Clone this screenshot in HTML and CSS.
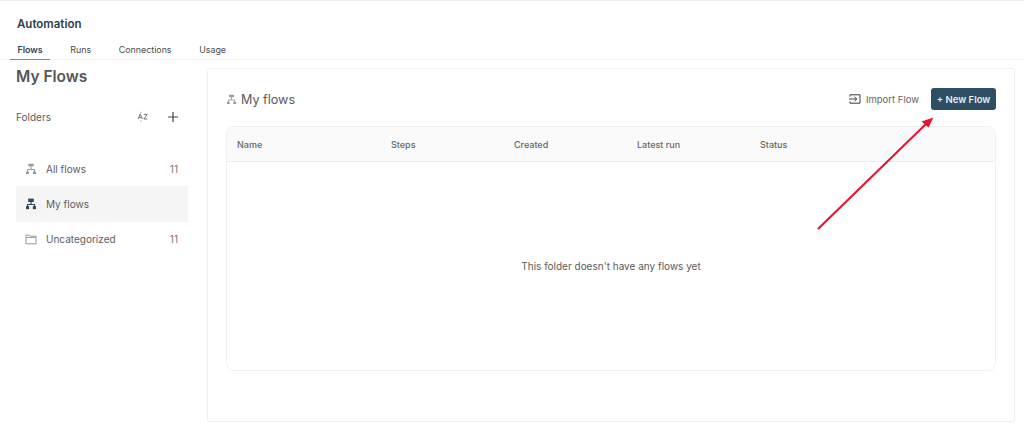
FILE: index.html
```html
<!DOCTYPE html>
<html lang="en">
<head>
<meta charset="utf-8">
<title>Automation</title>
<link rel="stylesheet" href="styles.css">
</head>
<body>
<div class="page">
  <header class="topbar">
    <h1 class="app-title">Automation</h1>
    <nav class="tabs">
      <span class="tab active">Flows</span>
      <span class="tab">Runs</span>
      <span class="tab">Connections</span>
      <span class="tab">Usage</span>
    </nav>
  </header>
  <div class="content">
    <aside class="sidebar">
      <h2 class="side-title">My Flows</h2>
      <div class="folders-head">
        <span class="folders-label">Folders</span>
        <span class="folder-actions">
          <svg class="az" width="12" height="12" viewBox="0 0 12 12" fill="none" stroke="#666" stroke-width=".9"><path d="M1.2 8 3.2 2.8 5.2 8M1.9 6.4h2.6"/><path d="M6.8 3.4h3.4L6.8 8h3.6"/><path d="M4 9.4v1.2M4 .8v1" stroke-width=".8"/></svg>
          <svg width="12" height="12" viewBox="0 0 12 12" fill="none" stroke="#444" stroke-width="1.2"><path d="M6 1v10M1 6h10"/></svg>
        </span>
      </div>
      <ul class="folder-list">
        <li class="folder">
          <svg class="fi" width="12" height="12" viewBox="0 0 12 12" fill="none" stroke="#999"><rect x="3.3" y="0.8" width="5.4" height="2.6" fill="#999" stroke="none"/><path d="M6 3.4v3M2.5 9V6.5h7V9" stroke-width="1"/><rect x="1" y="8.6" width="3" height="2.4" fill="#999" stroke="none"/><rect x="8" y="8.6" width="3" height="2.4" fill="#999" stroke="none"/></svg>
          <span class="folder-name">All flows</span><span class="count">11</span>
        </li>
        <li class="folder selected">
          <svg class="fi" width="12" height="12" viewBox="0 0 12 12" fill="none" stroke="#2d4a5e"><rect x="3.2" y="0.6" width="5.6" height="3.4" fill="#2d4a5e" stroke="none"/><path d="M6 4v2.4M2.5 9V6.5h7V9" stroke-width="1.2"/><rect x="1" y="8.2" width="3.2" height="3" fill="#2d4a5e" stroke="none"/><rect x="7.8" y="8.2" width="3.2" height="3" fill="#2d4a5e" stroke="none"/></svg>
          <span class="folder-name">My flows</span>
        </li>
        <li class="folder">
          <svg class="fi" width="12" height="12" viewBox="0 0 12 12" fill="none" stroke="#999" stroke-width="1"><path d="M1 3.6V2h3.4l1 1.2h5.6v7.6H1z"/><path d="M1 4.4h10"/></svg>
          <span class="folder-name">Uncategorized</span><span class="count">11</span>
        </li>
      </ul>
    </aside>
    <main class="panel">
      <div class="panel-head">
        <div class="panel-title">
          <svg width="11" height="11" viewBox="0 0 12 12" fill="none" stroke="#999"><rect x="3.3" y="0.8" width="5.4" height="2.6" fill="#999" stroke="none"/><path d="M6 3.4v3M2.5 9V6.5h7V9" stroke-width="1"/><rect x="1" y="8.6" width="3" height="2.4" fill="#999" stroke="none"/><rect x="8" y="8.6" width="3" height="2.4" fill="#999" stroke="none"/></svg>
          <span>My flows</span>
        </div>
        <div class="panel-actions">
          <span class="import">
            <svg width="12" height="12" viewBox="0 0 12 12" fill="none" stroke="#3c3c3c" stroke-width="1"><path d="M1 3.5V1.8h10v8.4H1V8.5"/><path d="M0 6h7.5M5.6 3.9 7.8 6 5.6 8.1"/></svg>
            Import Flow
          </span>
          <button class="new-flow" type="button">+ New Flow</button>
        </div>
      </div>
      <section class="table">
        <div class="table-head">
          <span class="col-name">Name</span>
          <span class="col">Steps</span>
          <span class="col">Created</span>
          <span class="col">Latest run</span>
          <span class="col">Status</span>
        </div>
        <div class="empty">This folder doesn't have any flows yet</div>
      </section>
    </main>
  </div>
  <svg class="arrow" width="1024" height="427" viewBox="0 0 1024 427" fill="none">
    <path d="M818.5 228.5 928 122" stroke="#e8142f" stroke-width="2.1" stroke-linecap="round"/>
    <path d="M933.5 117.5 921.5 121.5 928.5 127.5z" fill="#e8142f"/>
  </svg>
</div>
</body>
</html>
```
FILE: styles.css
```css
* { box-sizing: border-box; }
html, body { margin: 0; padding: 0; background: #fff; }
body { font-family: Inter, "Liberation Sans", sans-serif; color: #4a4a4a; overflow: hidden; }
.page { position: relative; width: 1024px; height: 427px; display: flex; flex-direction: column; border-top: 1px solid #ececec; }
.topbar { height: 59px; border-bottom: 1px solid #f0f0f0; display: flex; flex-direction: column; justify-content: flex-end; padding-left: 10px; flex: none; }
.app-title { margin: 0 0 8px 7px; font-size: 11.5px; line-height: 15px; font-weight: 600; color: #2d3f4e; }
.tabs { display: flex; gap: 12.6px; margin-bottom: -1px; }
.tab { padding: 0 7.5px; height: 20px; line-height: 19px; font-size: 8.9px; color: #4a4a4a; border-bottom: 1px solid transparent; }
.tab.active { font-weight: 600; color: #2f3f4c; border-bottom: 1px solid #7b8b97; }
.content { flex: 1; display: flex; padding: 0 9px 5px 16px; min-height: 0; }
.sidebar { width: 172px; margin-right: 19px; flex: none; }
.side-title { margin: 7px 0 0; font-size: 15.5px; line-height: 20px; font-weight: 600; color: #555; }
.folders-head { display: flex; align-items: center; justify-content: space-between; margin-top: 20px; height: 20px; padding-right: 9px; }
.folders-label { font-size: 10px; color: #5c5c5c; }
.folder-actions { display: flex; align-items: center; gap: 18px; }
.folder-list { list-style: none; margin: 24px 0 0; padding: 0; }
.folder { height: 35.25px; display: flex; align-items: center; padding: 0 10px; font-size: 10px; color: #5c5c5c; }
.folder.selected { background: #f5f5f5; }
.fi { flex: none; margin-right: 9px; margin-left: -1px; }
.folder-name { flex: 1; }
.count { color: #777; font-size: 10px; }
.panel { flex: 1; margin-top: 8px; border: 1px solid #f0f0f0; border-radius: 3px; padding: 19px 18px 0; height: 354px; }
.panel-head { display: flex; align-items: center; justify-content: space-between; height: 22px; margin-bottom: 16px; }
.panel-title { display: flex; align-items: center; gap: 4px; font-size: 12.6px; color: #5c5c5c; }
.panel-actions { display: flex; align-items: center; gap: 12px; }
.import { display: flex; align-items: center; gap: 5px; font-size: 9.5px; color: #666; }
.new-flow { width: 65px; height: 22px; padding: 0; border: 0; border-radius: 3px; background: #2d4e63; color: #e8edf0; font: 600 9.5px Inter, "Liberation Sans", sans-serif; }
.table { height: 245px; border: 1px solid #f0f0f0; border-radius: 8px; overflow: hidden; }
.table-head { height: 35px; display: grid; grid-template-columns: 154px 123px 123px 123px 1fr; align-items: center; padding-left: 10px; background: #fafafa; border-bottom: 1px solid #ededed; font-size: 9px; font-weight: 500; color: #666; }
.empty { height: 208px; display: flex; align-items: center; justify-content: center; font-size: 10px; color: #5c5c5c; }
.arrow { position: absolute; left: 0; top: -1px; pointer-events: none; }
```
